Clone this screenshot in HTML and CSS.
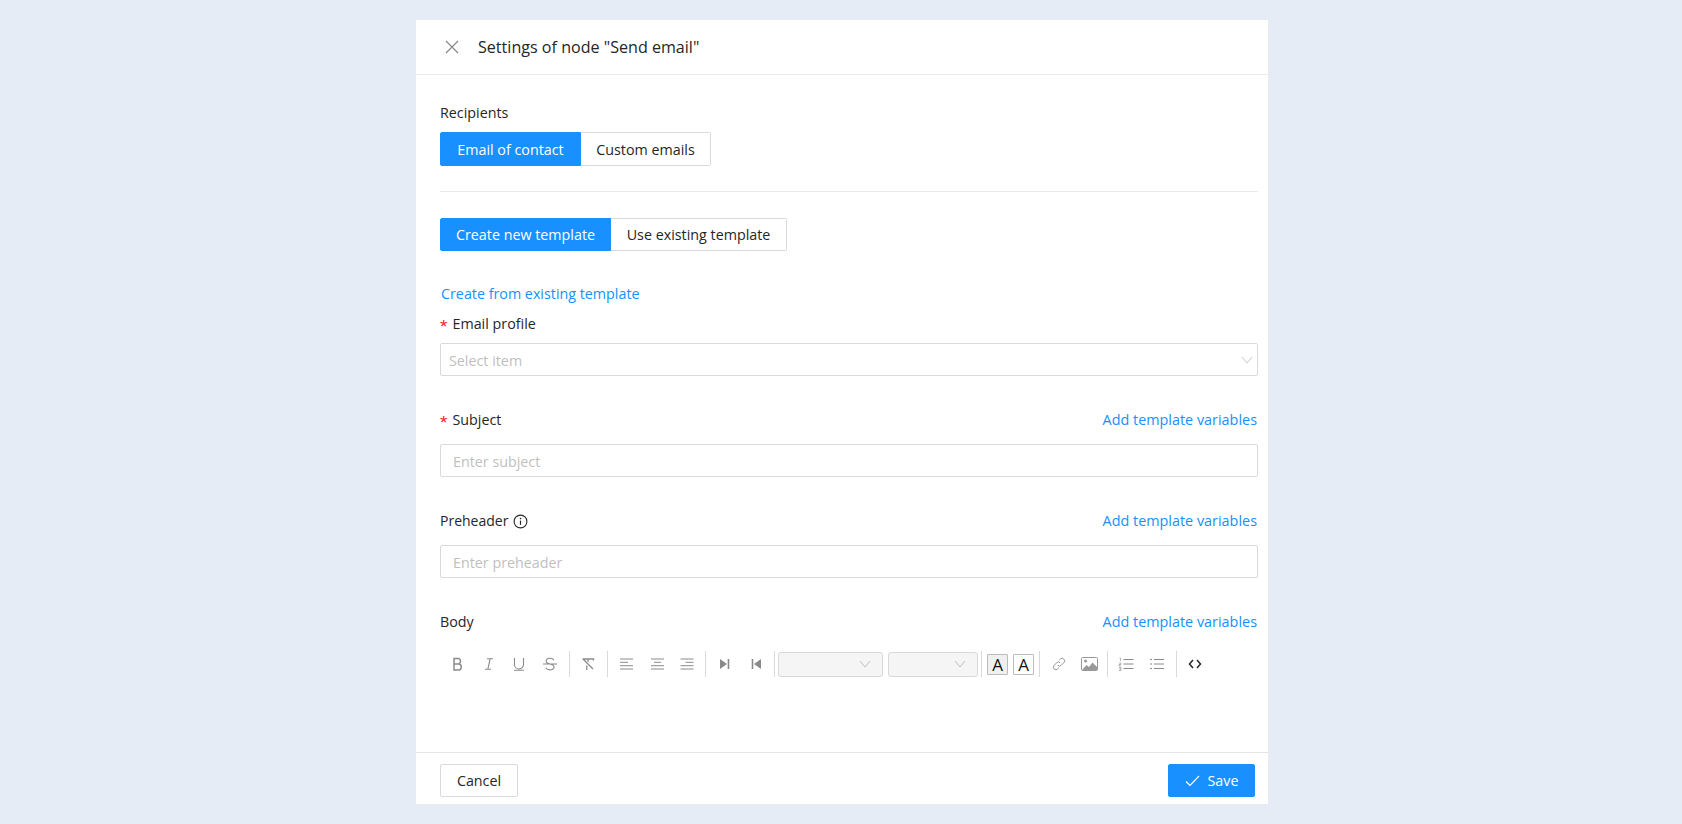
FILE: index.html
```html
<!DOCTYPE html>
<html lang="en">
<head>
<meta charset="utf-8">
<title>Settings of node</title>
<link rel="stylesheet" href="styles.css">
</head>
<body>
<div class="panel">
  <header class="head">
    <svg class="close" width="14" height="14" viewBox="0 0 14 14"><path d="M1 1l12 12M13 1L1 13" stroke="#8c8c8c" stroke-width="1.3" fill="none"/></svg>
    <span class="title">Settings of node "Send email"</span>
  </header>
  <main class="content">
    <div class="label recip">Recipients</div>
    <div class="seg seg-a"><span class="seg-btn on w1">Email of contact</span><span class="seg-btn w2">Custom emails</span></div>
    <hr class="divider">
    <div class="seg seg-b"><span class="seg-btn on w3">Create new template</span><span class="seg-btn w4">Use existing template</span></div>
    <a class="link from">Create from existing template</a>
    <div class="label profile"><span class="req">*</span>Email profile</div>
    <div class="select"><span class="ph">Select item</span>
      <svg class="chev" width="12" height="8" viewBox="0 0 12 8"><path d="M1 1l5 6 5-6" stroke="#c8c8c8" fill="none"/></svg>
    </div>
    <div class="row r-subject"><span class="label"><span class="req">*</span>Subject</span><a class="link">Add template variables</a></div>
    <input class="input" placeholder="Enter subject">
    <div class="row r-pre"><span class="label pre-label">Preheader<svg class="info" width="15" height="15" viewBox="0 0 15 15"><circle cx="7.5" cy="7.5" r="6.4" stroke="#262626" stroke-width="1.1" fill="none"/><path d="M7.5 6.6v4.2" stroke="#262626" stroke-width="1.2"/><circle cx="7.5" cy="4.6" r=".8" fill="#262626"/></svg></span><a class="link">Add template variables</a></div>
    <input class="input" placeholder="Enter preheader">
    <div class="row r-body"><span class="label">Body</span><a class="link">Add template variables</a></div>
    <div class="toolbar">
      <span class="tb"><svg width="16" height="16" viewBox="0 0 16 16"><path d="M4 2.5h4.6a3 3 0 0 1 0 5.6H4zM4 8h5a3.1 3.1 0 0 1 0 6H4z" fill="none" stroke="#8a8a8a" stroke-width="1.5"/></svg></span>
      <span class="tb"><svg width="16" height="16" viewBox="0 0 16 16"><path d="M6 2.7h6M4 13.300h6M9.200 2.700L6.800 13.300" fill="none" stroke="#8a8a8a" stroke-width="1.1"/></svg></span>
      <span class="tb"><svg width="16" height="16" viewBox="0 0 16 16"><path d="M3.500 2v6.500a4.500 4.500 0 0 0 9 0V2M3 14.300h10" fill="none" stroke="#8a8a8a" stroke-width="1.1"/></svg></span>
      <span class="tb"><svg width="16" height="16" viewBox="0 0 16 16"><path d="M12 4.200C11.300 2.800 10 2.200 8 2.200c-2.300 0-3.800 1.100-3.800 2.900 0 1.600 1.200 2.400 3.800 2.900 2.800.5 4 1.300 4 3 0 1.800-1.600 2.900-4 2.900-2 0-3.400-.7-4.200-2.200M1 8h14" fill="none" stroke="#8a8a8a" stroke-width="1.100"/></svg></span>
      <i class="sep s-a"></i>
      <span class="tb"><svg width="16" height="16" viewBox="0 0 16 16"><path d="M2.500 3h11v1.500M3 3l10 10M8 3v3M6.800 9.500V14" fill="none" stroke="#8a8a8a" stroke-width="1.300"/></svg></span>
      <i class="sep s-h"></i>
      <span class="tb"><svg width="16" height="16" viewBox="0 0 16 16"><path d="M2 3h13M2 6.300h8M2 9.700h13M2 13h13" fill="none" stroke="#8a8a8a"/></svg></span>
      <span class="tb"><svg width="16" height="16" viewBox="0 0 16 16"><path d="M2 3h13M5 6.300h7M2 9.700h13M2 13h13" fill="none" stroke="#8a8a8a"/></svg></span>
      <span class="tb"><svg width="16" height="16" viewBox="0 0 16 16"><path d="M1.500 3h13M6.500 6.300h8M1.500 9.700h13M1.500 13h13" fill="none" stroke="#8a8a8a"/></svg></span>
      <i class="sep s-b"></i>
      <span class="tb"><svg width="16" height="16" viewBox="0 0 16 16"><path d="M3 3l7 5-7 5z" fill="#8a8a8a"/><path d="M11.500 3v10" stroke="#8a8a8a" stroke-width="1.600"/></svg></span>
      <span class="tb"><svg width="16" height="16" viewBox="0 0 16 16"><path d="M13 3L6 8l7 5z" fill="#8a8a8a"/><path d="M4.500 3v10" stroke="#8a8a8a" stroke-width="1.600"/></svg></span>
      <i class="sep s-c"></i>
      <span class="tsel ts1"><svg width="12" height="8" viewBox="0 0 12 8"><path d="M1 1l5 6 5-6" stroke="#bdbdbd" fill="none"/></svg></span>
      <span class="tsel ts2"><svg width="12" height="8" viewBox="0 0 12 8"><path d="M1 1l5 6 5-6" stroke="#bdbdbd" fill="none"/></svg></span>
      <i class="sep s-d"></i>
      <span class="fa fa-on">A</span>
      <span class="fa">A</span>
      <i class="sep s-e"></i>
      <span class="tb"><svg width="16" height="16" viewBox="0 0 16 16"><path d="M6.800 9.200a2.500 2.500 0 0 0 3.600 0l2.500-2.600a2.500 2.500 0 0 0-3.600-3.500L8.200 4.200M9.200 6.800a2.500 2.500 0 0 0-3.600 0L3.100 9.400a2.500 2.500 0 0 0 3.600 3.500l1.100-1.100" fill="none" stroke="#999"/></svg></span>
      <span class="tb"><svg width="17" height="14" viewBox="0 0 17 14"><rect x=".5" y=".5" width="16" height="13" rx="1" fill="#fff" stroke="#999"/><circle cx="4.500" cy="4" r="1.500" fill="#999"/><path d="M1 13l4.500-5 2.500 2 3.500-4.500 4.500 4.500V13z" fill="#999"/></svg></span>
      <i class="sep s-f"></i>
      <span class="tb"><svg width="16" height="16" viewBox="0 0 16 16"><path d="M5.500 3.500h10M5.500 8h10M5.500 12.500h10" fill="none" stroke="#8a8a8a"/><path d="M1.500 2h1v3M1 7h2v1.500H1V10h2M1 11.500h2v3H1M1 13h2" fill="none" stroke="#8a8a8a" stroke-width=".6"/></svg></span>
      <span class="tb"><svg width="16" height="16" viewBox="0 0 16 16"><path d="M5 3.500h10M5 8h10M5 12.500h10" fill="none" stroke="#8a8a8a"/><path d="M1 3.500h2M1 8h2M1 12.500h2" fill="none" stroke="#8a8a8a"/></svg></span>
      <i class="sep s-g"></i>
      <span class="tb"><svg width="16" height="16" viewBox="0 0 16 16"><path d="M6 4L2.500 8 6 12M10 4l3.500 4-3.500 4" fill="none" stroke="#262626" stroke-width="1.500"/></svg></span>
    </div>
  </main>
  <footer class="foot">
    <span class="btn">Cancel</span>
    <span class="btn primary"><svg width="15" height="12" viewBox="0 0 15 12"><path d="M1 6.500L5 10.500 14 1" fill="none" stroke="#fff" stroke-width="1.200"/></svg>Save</span>
  </footer>
</div>
</body>
</html>
```
FILE: styles.css
```css
* { box-sizing: border-box; }
html, body { margin: 0; height: 100%; }
body {
  background: #e5ecf6;
  display: flex;
  justify-content: center;
  padding: 20px 0 0 2px;
  font-family: "Open Sans", "Noto Sans", sans-serif;
  font-size: 14.3px;
  color: #262626;
  overflow: hidden;
}
.panel {
  width: 852px;
  height: 784px;
  background: #fff;
  display: flex;
  flex-direction: column;
}
.head {
  height: 55px;
  flex: none;
  border-bottom: 1px solid #ebebeb;
  display: flex;
  align-items: center;
  padding-left: 29px;
}
.close { margin-right: 19px; }
.title { font-size: 16.1px; }
.content { flex: 1; padding: 0 10px 0 24px; }
.label { display: block; line-height: 20px; }
.recip { margin-top: 28px; }
.seg { display: flex; }
.seg-a { margin-top: 9px; height: 34px; }
.seg-b { height: 33px; }
.seg-btn {
  display: flex;
  align-items: center;
  justify-content: center;
  border: 1px solid #d9d9d9;
  border-left: 0;
  background: #fff;
}
.seg-btn:last-child { border-radius: 0 2px 2px 0; }
.seg-btn.on {
  background: #1890ff;
  border: 1px solid #1890ff;
  color: #fff;
  border-radius: 2px 0 0 2px;
}
.w1 { width: 141px; }
.w2 { width: 130px; }
.w3 { width: 171px; }
.w4 { width: 176px; }
.divider { border: 0; border-top: 1px solid #ebebeb; margin: 25px 0 26px; }
.link { color: #1890ff; display: block; line-height: 20px; }
.row .link { font-size: 14.4px; margin-right: 1px; }
.from { margin: 33px 0 0 1px; }
.profile { margin-top: 10px; }
.req {
  display: inline-block;
  width: 12.5px;
  color: #f5222d;
  font-family: "Liberation Sans", sans-serif;
  font-size: 19px;
  line-height: 14px;
  vertical-align: -4px;
}
.select, .input {
  display: block;
  width: 100%;
  height: 33px;
  border: 1px solid #d9d9d9;
  border-radius: 2px;
  background: #fff;
  font: inherit;
  outline: 0;
}
.select {
  margin-top: 9px;
  display: flex;
  align-items: center;
  justify-content: space-between;
  padding: 0 4px 0 8px;
}
.ph, .input::placeholder { color: #bfbfbf; opacity: 1; }
.ph { padding-top: 2px; }
.input { padding: 2px 12px 0; }
.row { display: flex; justify-content: space-between; align-items: center; height: 20px; }
.r-subject { margin-top: 34px; margin-bottom: 14px; }
.r-pre { margin-top: 34px; margin-bottom: 14px; }
.r-body { margin-top: 34px; margin-bottom: 19px; }
.pre-label { font-size: 14px; display: flex; align-items: center; }
.info { margin-left: 5px; }
.toolbar { display: flex; align-items: center; height: 26px; padding-left: 3px; }
.tb { width: 30.5px; height: 26px; display: flex; align-items: center; justify-content: center; flex: none; }
.sep { width: 1px; height: 26px; background: #d9d9d9; flex: none; }
.s-a { margin: 0 3px 0 4px; }
.s-h { margin: 0 3px 0 3.5px; }
.s-b { margin: 0 4px 0 2.5px; }
.s-c { margin: 0 3px; }
.s-d { margin: 0 5px 0 3px; }
.s-e { margin: 0 4px 0 0; }
.s-f { margin: 0 3px 0 2px; }
.s-g { margin: 0 3px 0 4px; }
.tsel {
  height: 25px;
  background: #f5f5f5;
  border: 1px solid #d9d9d9;
  border-radius: 3px;
  display: flex;
  align-items: center;
  justify-content: flex-end;
  padding-right: 11px;
  flex: none;
}
.ts1 { width: 105px; margin-right: 5px; }
.ts2 { width: 90px; }
.fa {
  width: 21px;
  height: 21px;
  margin-right: 5px;
  border: 1px solid #bbb;
  border-radius: 1px;
  display: flex;
  align-items: center;
  justify-content: center;
  font-size: 17px;
  color: #111;
  flex: none;
}
.fa-on { background: #f0f0f0; }
.foot {
  height: 52px;
  flex: none;
  border-top: 1px solid #e4e4e4;
  display: flex;
  justify-content: space-between;
  padding: 11px 13px 0 24px;
}
.btn {
  height: 33px;
  width: 78px;
  border: 1px solid #d9d9d9;
  border-radius: 2px;
  display: flex;
  align-items: center;
  justify-content: center;
}
.primary {
  width: 87px;
  background: #1890ff;
  border-color: #1890ff;
  color: #fff;
  gap: 8px;
}
```
